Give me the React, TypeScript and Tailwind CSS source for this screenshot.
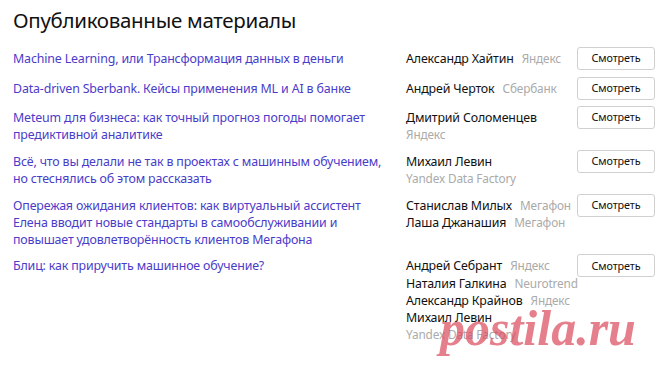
import React from "react";

type Person = { name: string; org: string; wrap?: boolean };
type Row = { title: string; people: Person[] };

const rows: Row[] = [
  { title: "Machine Learning, или Трансформация данных в деньги", people: [{ name: "Александр Хайтин", org: "Яндекс" }] },
  { title: "Data-driven Sberbank. Кейсы применения ML и AI в банке", people: [{ name: "Андрей Черток", org: "Сбербанк" }] },
  {
    title: "Meteum для бизнеса: как точный прогноз погоды помогает предиктивной аналитике",
    people: [{ name: "Дмитрий Соломенцев", org: "Яндекс", wrap: true }],
  },
  {
    title: "Всё, что вы делали не так в проектах с машинным обучением, но стеснялись об этом рассказать",
    people: [{ name: "Михаил Левин", org: "Yandex Data Factory", wrap: true }],
  },
  {
    title: "Опережая ожидания клиентов: как виртуальный ассистент Елена вводит новые стандарты в самообслуживании и повышает удовлетворённость клиентов Мегафона",
    people: [
      { name: "Станислав Милых", org: "Мегафон" },
      { name: "Лаша Джанашия", org: "Мегафон" },
    ],
  },
  {
    title: "Блиц: как приручить машинное обучение?",
    people: [
      { name: "Андрей Себрант", org: "Яндекс" },
      { name: "Наталия Галкина", org: "Neurotrend" },
      { name: "Александр Крайнов", org: "Яндекс" },
      { name: "Михаил Левин", org: "Yandex Data Factory", wrap: true },
    ],
  },
];

export default function App() {
  return (
    <div
      className="relative w-[660px] h-[373px] overflow-hidden bg-white pl-[13px] pr-[5px]"
      style={{ fontFamily: '"Noto Sans", "Open Sans", sans-serif' }}
    >
      <h1 className="pt-[5px] text-[20.5px] leading-[30px] text-[#111] font-normal tracking-[-0.3px]">
        Опубликованные материалы
      </h1>
      <div className="mt-[15px] flex flex-col gap-[9.5px]">
        {rows.map((r, i) => (
          <div key={i} className="flex items-start">
            <div className="w-[393px] shrink-0 pr-[8px] text-[12.4px] leading-[17px] tracking-[-0.15px] text-[#4a3cc9]">
              {r.title}
            </div>
            <div className="w-[171px] shrink-0 flex flex-col text-[12.4px] leading-[17.2px] tracking-[-0.15px]">
              {r.people.map((p, j) =>
                p.wrap ? (
                  <div key={j} className="flex flex-col">
                    <span className="text-[#111]">{p.name}</span>
                    <span className="text-[#aaa] text-[11.8px]">{p.org}</span>
                  </div>
                ) : (
                  <div key={j} className="flex gap-[8px] whitespace-nowrap">
                    <span className="text-[#111]">{p.name}</span>
                    <span className="text-[#aaa] text-[11.8px]">{p.org}</span>
                  </div>
                )
              )}
            </div>
            <button className="mt-[-3px] w-[78px] h-[23px] shrink-0 rounded-[3px] border border-[#d0d0d0] bg-white text-[10.8px] tracking-[-0.1px] text-[#111]">
              Смотреть
            </button>
          </div>
        ))}
      </div>
      <div
        className="absolute left-[440px] top-[303px] text-[50px] leading-none font-bold italic text-[#dc4a5c] opacity-70 pointer-events-none"
        style={{ fontFamily: '"Liberation Serif", serif' }}
      >
        postila.ru
      </div>
    </div>
  );
}
